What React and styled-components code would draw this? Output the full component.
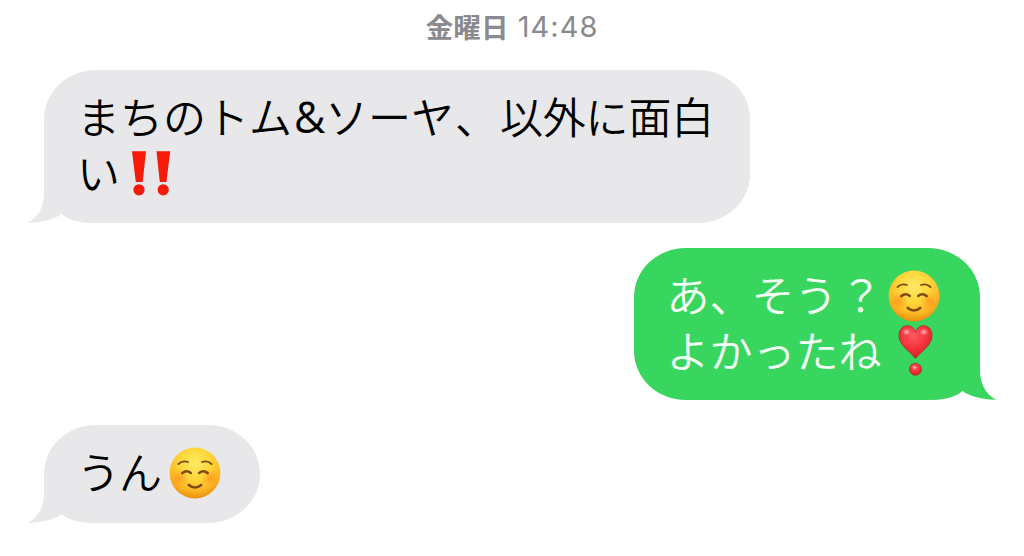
import React from 'react';
import styled, {createGlobalStyle} from 'styled-components';

const GlobalStyle = createGlobalStyle`
    body {
        margin: 0;
        background: #ffffff;
        font-family: "Noto Sans CJK JP", "Liberation Sans", sans-serif;
    }
`

const Conversation = styled.main`
    display: flex;
    flex-direction: column;
    box-sizing: border-box;
    width: 1024px;
    height: 556px;
    padding: 6px 44px 0;
    overflow: hidden;
`

const Timestamp = styled.header`
    display: flex;
    justify-content: center;
    align-items: center;
    gap: 9px;
    height: 40px;
    margin-bottom: 24px;
    color: #8a8a8e;
    line-height: 40px;
`

const Weekday = styled.span`
    font-size: 27.5px;
    font-weight: 700;
    letter-spacing: 0.2px;
`

const Time = styled.time`
    font-family: Inter, "Liberation Sans", sans-serif;
    font-size: 29px;
    letter-spacing: 1px;
    margin-top: 2px;
`

const Bubble = styled.div`
    position: relative;
    align-self: ${props => props.$sent ? "flex-end" : "flex-start"};
    box-sizing: border-box;
    width: ${props => props.$width}px;
    margin-bottom: 25px;
    padding: 20px 33px ${props => props.$single ? 21.5 : 20.5}px;
    border-radius: 52px / 49px;
    background: ${props => props.$sent ? "#38d65e" : "#e8e8ea"};
    color: ${props => props.$sent ? "#f4fff5" : "#000000"};
`

const Line = styled.p`
    display: flex;
    align-items: center;
    height: 56px;
    margin: 0;
    font-size: 43px;
    font-weight: 350;
    line-height: 56px;
    white-space: nowrap;
`

const Run = styled.span`
    letter-spacing: ${props => props.$tracking || 0}px;
    margin-left: ${props => props.$shift || 0}px;
    padding-bottom: 6px;
`

const Latin = styled.span`
    width: 31px;
    margin: 0 1px 0 2px;
    padding-bottom: 2px;
    font-family: "Open Sans", "Liberation Sans", sans-serif;
    font-size: 43px;
    font-weight: 400;
`

const TailShape = styled.svg`
    position: absolute;
    bottom: 0;
    ${props => props.$sent ? "right: -16px; transform: scaleX(-1);" : "left: -16px;"}
    fill: ${props => props.$sent ? "#38d65e" : "#e8e8ea"};
`

const Emoji = styled.svg`
    flex: none;
    margin-left: ${props => props.$shift || 0}px;
    overflow: visible;
`

const Tail = ({sent}) => (
    <TailShape $sent={sent} width="66" height="50" viewBox="0 0 66 50">
        <path d="M16 0V20C16 33 11 44 0 49.7C13 50 26 46.5 33.5 41C40 46.5 50 50 64 50Z" />
    </TailShape>
)

const Smile = ({id, shift}) => (
    <Emoji $shift={shift} width="52" height="52" viewBox="0 0 52 52">
        <defs>
            <radialGradient id={id + "face"} cx="0.5" cy="0.32" r="0.7">
                <stop offset="0" stopColor="#ffea66" />
                <stop offset="0.45" stopColor="#ffd638" />
                <stop offset="0.76" stopColor="#fcb624" />
                <stop offset="1" stopColor="#ea8a0e" />
            </radialGradient>
            <radialGradient id={id + "cheek"}>
                <stop offset="0" stopColor="#ff7c14" stopOpacity="0.55" />
                <stop offset="1" stopColor="#ff8c1a" stopOpacity="0" />
            </radialGradient>
        </defs>
        <circle cx="26" cy="26" r="25.4" fill={`url(#${id}face)`} />
        <circle cx="10.5" cy="31" r="9.5" fill={`url(#${id}cheek)`} />
        <circle cx="41.5" cy="31" r="9.5" fill={`url(#${id}cheek)`} />
        <g fill="none" stroke="#7c4a17" strokeLinecap="round">
            <path d="M9.5 17Q13.5 13 19 15M33 15Q38.5 13 42.5 17" strokeWidth="1.8" />
            <path d="M13.2 26.2Q17.5 22.4 21.8 26M30.2 26Q34.5 22.4 38.8 26.2" strokeWidth="2.5" />
            <path d="M19.8 38Q26 43 32.2 38" strokeWidth="2.6" />
        </g>
    </Emoji>
)

const DoubleExclamation = () => (
    <Emoji $shift={4} width="52" height="52" viewBox="0 0 52 52" fill="#f51b08">
        <path d="M8 3.2H22L18.7 34H11.8ZM32.5 3.2H46.2L42.4 34H35.8Z" />
        <circle cx="15" cy="41.8" r="5.6" />
        <circle cx="39.2" cy="41.8" r="5.6" />
    </Emoji>
)

const HeartExclamation = () => (
    <Emoji $shift={7} width="52" height="52" viewBox="0 0 52 52">
        <defs>
            <radialGradient id="heart" cx="0.45" cy="0.3" r="0.7">
                <stop offset="0" stopColor="#ff5961" />
                <stop offset="0.65" stopColor="#f22c37" />
                <stop offset="1" stopColor="#c92528" />
            </radialGradient>
            <radialGradient id="shine">
                <stop offset="0" stopColor="#ffd0d3" stopOpacity="0.85" />
                <stop offset="1" stopColor="#ff8a90" stopOpacity="0" />
            </radialGradient>
        </defs>
        <g fill="url(#heart)" stroke="#a63a23" strokeWidth="1">
            <path d="M26.5 32.5C21 25 10 19.5 10 9.5C10 3 14 -0.2 18.5 -0.2C22.5 -0.2 25.5 2.5 26.5 6C27.5 2.5 30.5 -0.2 34.5 -0.2C39 -0.2 43 3 43 9.5C43 19.5 32 25 26.5 32.5Z" />
            <circle cx="26.5" cy="43.3" r="6" />
        </g>
        <ellipse cx="17.5" cy="6" rx="5" ry="4" fill="url(#shine)" />
        <ellipse cx="35" cy="6" rx="5" ry="4" fill="url(#shine)" />
        <circle cx="25.5" cy="41.5" r="2.8" fill="url(#shine)" />
    </Emoji>
)

const App = () => (
    <>
        <GlobalStyle />
        <Conversation>
            <Timestamp>
                <Weekday>金曜日</Weekday>
                <Time>14:48</Time>
            </Timestamp>
            <Bubble $width={705.5}>
                <Tail />
                <Line>
                    <Run>まちのトム</Run>
                    <Latin>&amp;</Latin>
                    <Run $shift={-1}>ソーヤ</Run>
                    <Run $shift={1}>、</Run>
                    <Run $shift={2} $tracking={-0.2}>以外に面白</Run>
                </Line>
                <Line>
                    <Run>い</Run>
                    <DoubleExclamation />
                </Line>
            </Bubble>
            <Bubble $sent $width={346.5}>
                <Tail sent />
                <Line>
                    <Run>あ、</Run>
                    <Run $shift={-1}>そう</Run>
                    <Run $shift={2}>？</Run>
                    <Smile id="sent" shift={5} />
                </Line>
                <Line>
                    <Run>よかったね</Run>
                    <HeartExclamation />
                </Line>
            </Bubble>
            <Bubble $single $width={215.5}>
                <Tail />
                <Line>
                    <Run $tracking={-1}>うん</Run>
                    <Smile id="reply" shift={8} />
                </Line>
            </Bubble>
        </Conversation>
    </>
)

export default App;
